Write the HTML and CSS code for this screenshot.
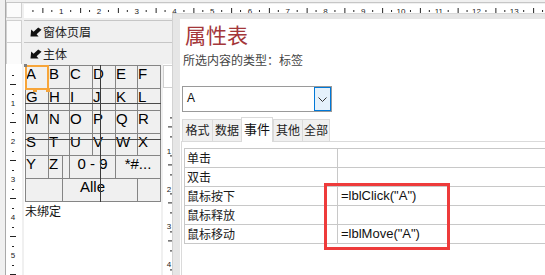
FILE: index.html
```html
<!DOCTYPE html>
<html>
<head>
<meta charset="utf-8">
<link rel="stylesheet" href="styles.css">
</head>
<body>
<div class="app">
  <div class="designer">
    <div class="toprow">
      <div class="corner"></div>
      <div class="hruler">
        <svg class="ruler-svg" width="521" height="14" viewBox="0 0 521 14" shape-rendering="crispEdges">
          <defs>
            <pattern id="hp" x="-0.5" y="0" width="37.75" height="14" patternUnits="userSpaceOnUse">
              <rect x="9.4" y="6" width="1" height="2" fill="#222"/>
              <rect x="18.9" y="4" width="1" height="5" fill="#222"/>
              <rect x="28.3" y="6" width="1" height="2" fill="#222"/>
            </pattern>
          </defs>
          <rect x="0" y="0" width="521" height="14" fill="url(#hp)"/>
          <g class="rnum" text-anchor="middle">
            <text x="37.3" y="9.5">1</text><text x="75" y="9.5">2</text><text x="112.8" y="9.5">3</text>
            <text x="150.5" y="9.5">4</text><text x="188.3" y="9.5">5</text><text x="226" y="9.5">6</text>
            <text x="263.8" y="9.5">7</text><text x="301.5" y="9.5">8</text><text x="339.3" y="9.5">9</text>
            <text x="377" y="9.5">10</text><text x="414.8" y="9.5">11</text><text x="452.5" y="9.5">12</text>
            <text x="490.3" y="9.5">13</text>
          </g>
        </svg>
      </div>
    </div>
    <div class="mainrow">
      <div class="vcol">
        <div class="vbox"></div>
        <div class="vbox"></div>
        <div class="vruler">
          <svg class="ruler-svg" width="16" height="211" viewBox="0 0 16 211" shape-rendering="crispEdges">
            <defs>
              <pattern id="vp" x="0" y="1" width="16" height="38" patternUnits="userSpaceOnUse">
                <rect x="6" y="9.5" width="2" height="1" fill="#222"/>
                <rect x="4" y="19" width="6" height="1" fill="#222"/>
                <rect x="6" y="28.5" width="2" height="1" fill="#222"/>
              </pattern>
            </defs>
            <rect x="0" y="0" width="16" height="211" fill="url(#vp)"/>
            <g class="rnum" text-anchor="middle">
              <text x="7" y="42">1</text><text x="7" y="80">2</text><text x="7" y="118">3</text>
              <text x="7" y="156">4</text><text x="7" y="194">5</text>
            </g>
          </svg>
        </div>
      </div>
      <div class="canvas">
        <div class="secbar">
          <svg class="secicon" width="12" height="10" viewBox="0 0 12 10"><path d="M0.5 9.5 L1.2 2.5 L3.6 4.8 L8.2 0.5 L11.5 2.8 L6.6 7.2 L8.6 9.5 Z" fill="#111"/></svg>
          <span>窗体页眉</span>
        </div>
        <div class="secbar">
          <svg class="secicon" width="12" height="10" viewBox="0 0 12 10"><path d="M0.5 9.5 L1.2 2.5 L3.6 4.8 L8.2 0.5 L11.5 2.8 L6.6 7.2 L8.6 9.5 Z" fill="#111"/></svg>
          <span>主体</span>
        </div>
        <div class="formrow">
          <div class="form">
            <div class="grid">
              <div class="cell">A</div><div class="cell">B</div><div class="cell">C</div><div class="cell">D</div><div class="cell">E</div><div class="cell">F</div>
              <div class="cell">G</div><div class="cell">H</div><div class="cell">I</div><div class="cell">J</div><div class="cell">K</div><div class="cell">L</div>
              <div class="cell">M</div><div class="cell">N</div><div class="cell">O</div><div class="cell">P</div><div class="cell">Q</div><div class="cell">R</div>
              <div class="cell">S</div><div class="cell">T</div><div class="cell">U</div><div class="cell">V</div><div class="cell">W</div><div class="cell">X</div>
              <div class="cell">Y</div><div class="cell">Z</div><div class="cell span2 center">0 - 9</div><div class="cell span2 center">*#...</div>
              <div class="cell span5 alle">Alle</div><div class="cell"></div>
            </div>
            <div class="unbound">未绑定</div>
            <div class="vline dark"></div>
            <div class="vline short"></div>
            <div class="hline h1"></div>
            <div class="hline h2"></div>
            <div class="sel"></div>
            <div class="handle h-tl"></div>
            <div class="handle h-bm"></div>
            <div class="handle h-br"></div>
          </div>
          <div class="r2col">
            <div class="r2box"></div>
            <svg class="ruler-svg" width="10" height="188" viewBox="0 0 10 188" shape-rendering="crispEdges">
              <defs>
                <pattern id="vp2" x="0" y="-18.6" width="10" height="38" patternUnits="userSpaceOnUse">
                  <rect x="7" y="9.5" width="2" height="1" fill="#222"/>
                  <rect x="5" y="19" width="5" height="1" fill="#222"/>
                  <rect x="7" y="28.5" width="2" height="1" fill="#222"/>
                </pattern>
              </defs>
              <rect x="0" y="20" width="10" height="168" fill="url(#vp2)"/>
              <g class="rnum" text-anchor="middle">
                <text x="6" y="66">1</text><text x="6" y="104">2</text><text x="6" y="141">3</text><text x="6" y="179">4</text>
              </g>
            </svg>
          </div>
        </div>
      </div>
    </div>
  </div>

  <div class="props">
    <div class="sheet">
      <div class="title">属性表</div>
      <div class="subtitle">所选内容的类型：标签</div>
      <div class="combo">
        <span class="combo-val">A</span>
        <span class="combo-btn">
          <svg width="9" height="5" viewBox="0 0 9 5"><polyline points="0.5,0.5 4.5,4.5 8.5,0.5" fill="none" stroke="#333" stroke-width="1"/></svg>
        </span>
      </div>
      <div class="tabs">
        <div class="tab w1">格式</div>
        <div class="tab w2">数据</div>
        <div class="tab active w3">事件</div>
        <div class="tab w4">其他</div>
        <div class="tab w5">全部</div>
      </div>
      <div class="tabbody">
        <div class="evtable">
          <div class="evrow"><div class="evlabel">单击</div><div class="evval"></div></div>
          <div class="evrow"><div class="evlabel">双击</div><div class="evval"></div></div>
          <div class="evrow"><div class="evlabel">鼠标按下</div><div class="evval">=lblClick("A")</div></div>
          <div class="evrow"><div class="evlabel">鼠标释放</div><div class="evval"></div></div>
          <div class="evrow"><div class="evlabel">鼠标移动</div><div class="evval">=lblMove("A")</div></div>
        </div>
      </div>
    </div>
    <div class="redbox"></div>
  </div>
</div>
</body>
</html>
```

FILE: styles.css
```css
* { box-sizing: border-box; margin: 0; padding: 0; }

body {
  width: 545px;
  height: 275px;
  overflow: hidden;
  background: #f0f0f0;
  font-family: "Noto Sans CJK SC", "Liberation Sans", sans-serif;
  color: #1a1a1a;
}

.app {
  position: relative;
  width: 545px;
  height: 275px;
  overflow: hidden;
  background: #f0f0f0;
}

/* ---------- designer ---------- */
.designer {
  margin-left: 5px;
  height: 275px;
  border-left: 1px solid #a9a9a9;
  display: flex;
  flex-direction: column;
}

.toprow {
  margin-top: 2px;
  height: 16px;
  border-top: 1px solid #c6c6c6;
  display: flex;
  gap: 2px;
}

.corner {
  width: 16px;
  height: 15px;
  background: #fbfbfb;
  border: 1px solid #d0d0d0;
  border-top: none;
}

.hruler {
  flex: 1;
  height: 14px;
  margin-top: 1px;
  background: #fff;
  overflow: hidden;
}

.ruler-svg { display: block; }

.rnum {
  font-family: "Liberation Sans", sans-serif;
  font-size: 8px;
  fill: #222;
}

.mainrow {
  margin-top: 2px;
  display: flex;
  gap: 2px;
  flex: 1;
}

.vcol {
  width: 16px;
  display: flex;
  flex-direction: column;
}

.vbox {
  height: 22px;
  background: #fbfbfb;
  border: 1px solid #d0d0d0;
  border-bottom: none;
}

.vruler {
  flex: 1;
  background: #fff;
  overflow: hidden;
}

.canvas {
  flex: 1;
  display: flex;
  flex-direction: column;
}

.secbar {
  height: 22px;
  border-top: 1px solid #c6c6c6;
  background: #f0f0f0;
  display: flex;
  align-items: center;
  gap: 1px;
  padding-left: 6px;
  font-size: 12px;
  color: #222;
}

.secicon { display: block; margin-top: 1px; }

.formrow {
  flex: 1;
  display: flex;
  gap: 2px;
}

.form {
  position: relative;
  width: 137px;
  background: #fff;
  border-top: 1px solid #f0f0f0;
}

.grid {
  margin-left: 1px;
  display: grid;
  grid-template-columns: 22px 20px 22px 22px 21px 22px;
  grid-template-rows: 22px 21px 22px 21px 22px 22px;
  gap: 1px;
  padding: 1px;
  width: 136px;
  background: #858585;
}

.cell {
  background: #f0f0f0;
  font-family: "Liberation Sans", sans-serif;
  font-size: 15px;
  line-height: 14px;
  padding-top: 1px;
  color: #000;
  white-space: nowrap;
  overflow: hidden;
}

.span2 { grid-column: span 2; }
.span5 { grid-column: span 5; }
.center { text-align: center; }
.alle { padding-left: 54px; }

.unbound {
  margin-left: 1px;
  font-size: 12px;
  line-height: 17px;
  color: #111;
}

.vline, .hline { position: absolute; }

.vline.dark {
  left: 76px;
  top: 0;
  width: 1px;
  height: 137px;
  background: #3a3a3a;
}

.vline.short {
  left: 38px;
  top: 90px;
  width: 1px;
  height: 47px;
  background: #858585;
}

.hline {
  left: 1px;
  width: 136px;
  height: 1px;
  background: #4a4a4a;
}
.hline.h1 { top: 38px; }
.hline.h2 { top: 74px; }

.sel {
  position: absolute;
  left: 1px;
  top: 0;
  width: 24px;
  height: 25px;
  border: 2px solid #f7a53a;
}

.handle {
  position: absolute;
  width: 4px;
  height: 4px;
  background: #f7a53a;
}
.h-tl { left: 0; top: -1px; width: 3px; height: 3px; background: #808080; }
.h-bm { left: 9px; top: 23px; }
.h-br { left: 22px; top: 23px; }

.r2col {
  width: 10px;
  background: #fff;
  display: flex;
  flex-direction: column;
}

.r2box {
  height: 23px;
  margin-top: 1px;
  border: 1px solid #d0d0d0;
}

/* ---------- property sheet ---------- */
.props {
  position: absolute;
  left: 172px;
  top: 13px;
  right: 0;
  bottom: 0;
  background: #e6e6e6;
  border-left: 1px solid #d2d2d2;
  border-top: 1px solid #d8d8d8;
  padding: 5px 0 0 7px;
}

.sheet {
  background: #fff;
  height: 100%;
  overflow: hidden;
}

.title {
  padding-left: 5px;
  font-size: 21px;
  line-height: 30px;
  color: #a4373a;
}

.subtitle {
  margin-top: 3px;
  padding-left: 3px;
  font-size: 12px;
  line-height: 16px;
  color: #444;
}

.combo {
  margin: 18px 0 0 2px;
  width: 150px;
  height: 26px;
  border: 1px solid #9a9a9a;
  display: flex;
  align-items: center;
}

.combo-val {
  padding-left: 4px;
  margin-top: -3px;
  font-family: "Liberation Sans", sans-serif;
  font-size: 12px;
  color: #111;
}

.combo-btn {
  margin-left: auto;
  width: 17px;
  height: 24px;
  border: 1px solid #0078d7;
  background: #e5f1fb;
  display: flex;
  align-items: center;
  justify-content: center;
}

.tabs {
  margin-top: 5px;
  height: 24px;
  padding-left: 2px;
  display: flex;
  align-items: flex-end;
  position: relative;
  z-index: 1;
}

.tab {
  height: 22px;
  background: #f0f0f0;
  border: 1px solid #dadada;
  border-bottom: none;
  border-right: none;
  font-size: 12px;
  line-height: 20px;
  text-align: center;
  color: #222;
}
.tab.w1 { width: 30px; }
.tab.w2 { width: 29px; }
.tab.w3 { width: 32px; }
.tab.w4 { width: 29px; }
.tab.w5 { width: 28px; border-right: 1px solid #dadada; }

.tab.active {
  height: 25px;
  margin-bottom: -1px;
  background: #fff;
  border-right: 1px solid #dadada;
  font-size: 13px;
  line-height: 22px;
  color: #111;
}

.tabbody {
  margin-left: 1px;
  border-top: 1px solid #dadada;
  border-left: 1px solid #dadada;
  padding: 6px 0 0 2px;
  height: 200px;
}

.evtable {
  border-top: 1px solid #c8c8c8;
  border-left: 1px solid #c8c8c8;
}

.evrow {
  display: grid;
  grid-template-columns: 152px 1fr;
  height: 19px;
  border-bottom: 1px solid #c8c8c8;
}

.evlabel {
  padding-left: 2px;
  font-size: 12px;
  line-height: 18px;
  color: #1a1a1a;
}

.evval {
  border-left: 1px solid #c8c8c8;
  padding-left: 3px;
  font-family: "Liberation Sans", sans-serif;
  font-size: 13px;
  line-height: 18px;
  color: #111;
}

.redbox {
  position: absolute;
  left: 151px;
  top: 169px;
  width: 126px;
  height: 67px;
  border: 3px solid #ee3b3b;
}
```
